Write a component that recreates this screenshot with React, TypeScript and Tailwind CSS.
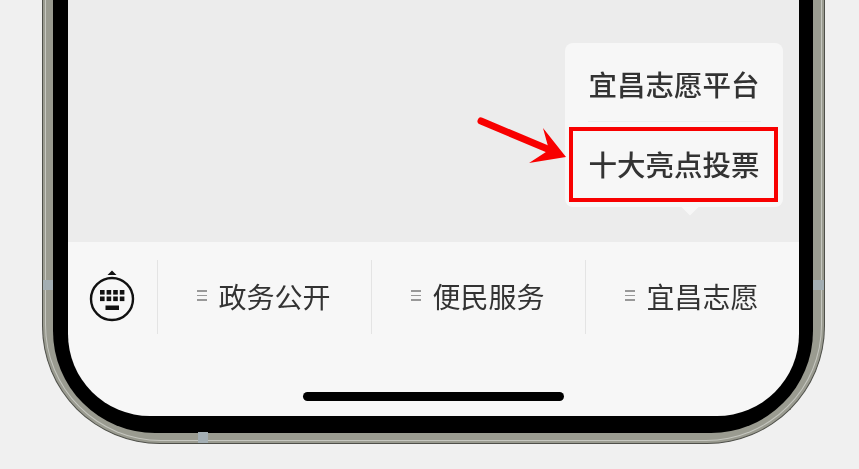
const CJK = "font-['Noto_Sans_CJK_SC','Liberation_Sans',sans-serif]";

const MENU_TABS = ["政务公开", "便民服务", "宜昌志愿"];

function KeyboardIcon() {
  const keys = [0, 1, 2, 3];
  return (
    <svg width="46" height="54" viewBox="0 0 46 54" fill="none">
      <path d="M23 0.5 L27.5 5 L18.5 5 Z" fill="#111" />
      <circle cx="23" cy="29" r="21" stroke="#111" strokeWidth="2.4" />
      {keys.map((i) => (
        <g key={i} fill="#111">
          <rect x={11 + i * 6.6} y="20" width="4.6" height="4.6" />
          <rect x={11 + i * 6.6} y="26.5" width="4.6" height="4.6" />
        </g>
      ))}
      <rect x="16.5" y="35.5" width="13.5" height="4.5" fill="#111" />
    </svg>
  );
}

function MenuLines() {
  return (
    <div className="flex flex-col gap-[3px] w-[10px]">
      <div className="h-[1.5px] bg-[#999]" />
      <div className="h-[1.5px] bg-[#999]" />
      <div className="h-[1.5px] bg-[#999]" />
    </div>
  );
}

function Popup() {
  return (
    <div className="absolute left-[497px] top-[43px] w-[218px] h-[164px] bg-[#f7f7f7] rounded-lg flex flex-col items-center">
      <div className="h-[79px] w-[173px] pt-[4px] flex items-center justify-center border-b border-[#ededed] text-[28.5px] leading-none font-medium text-[#333] blur-[0.4px]">
        宜昌志愿平台
      </div>
      <div className="h-[85px] flex items-center justify-center text-[28.5px] leading-none font-medium text-[#333] blur-[0.4px]">
        十大亮点投票
      </div>
      {/* tail */}
      <div className="absolute left-[119px] top-[158px] w-3 h-3 bg-[#f7f7f7] rotate-45" />
      {/* highlight box */}
      <div className="absolute left-[4px] top-[84px] w-[209px] h-[75px] border-[4px] border-[#f80000]" />
    </div>
  );
}

function Arrow() {
  return (
    <svg className="absolute left-[405px] top-[112px]" width="100" height="58" viewBox="0 0 100 58" fill="none">
      <path d="M8 9 L77 38" stroke="#f80000" strokeWidth="7" strokeLinecap="round" />
      <path d="M70 16 L93 45 L56 51 L76 38 Z" fill="#f80000" />
    </svg>
  );
}

export default function App() {
  return (
    <div className={`w-[859px] h-[469px] overflow-hidden bg-[#f0f0f0] pl-[42px] ${CJK}`}>
      {/* phone frame */}
      <div className="relative w-[783px] h-[444px] rounded-b-[118px] bg-[#9a9b90] border-x border-b border-[#4f504a] pl-[2px] pr-[2px] pb-[2px]">
        <div className="h-full rounded-b-[116px] border-x border-b border-[#c6c7c0] pl-[7px] pr-[8px] pb-[7px]">
          <div className="h-full bg-black rounded-b-[102px] pl-[15px] pr-[14px] pb-[17px]">
            <div className="h-full rounded-b-[82px] overflow-hidden flex flex-col">
              <div className="relative h-[242px] shrink-0 bg-[#ececec]">
                <Popup />
                <Arrow />
              </div>
              <div className="flex-1 bg-[#f7f7f7] flex flex-col">
                <div className="mt-[18px] h-[74px] flex">
                  <div className="w-[89px] flex items-center justify-center pr-[1px]">
                    <KeyboardIcon />
                  </div>
                  {MENU_TABS.map((tab) => (
                    <div key={tab} className="w-[214px] border-l border-[#e4e4e4] flex items-center justify-center gap-[11px] pb-[3px] pr-[1px]">
                      <MenuLines />
                      <span className="text-[28px] leading-none text-[#333] blur-[0.3px]">{tab}</span>
                    </div>
                  ))}
                </div>
                <div className="mt-[58px] ml-[235px] w-[261px] h-[9px] rounded-full bg-black" />
              </div>
            </div>
          </div>
        </div>
        {/* resize handles left on the frame */}
        <div className="absolute left-0 top-[280px] w-[10px] h-[10px] bg-[#a3aeb3]" />
        <div className="absolute right-0 top-[280px] w-[11px] h-[10px] bg-[#a3aeb3]" />
        <div className="absolute left-[155px] bottom-0 w-[10px] h-[11px] bg-[#a3aeb3]" />
      </div>
    </div>
  );
}
